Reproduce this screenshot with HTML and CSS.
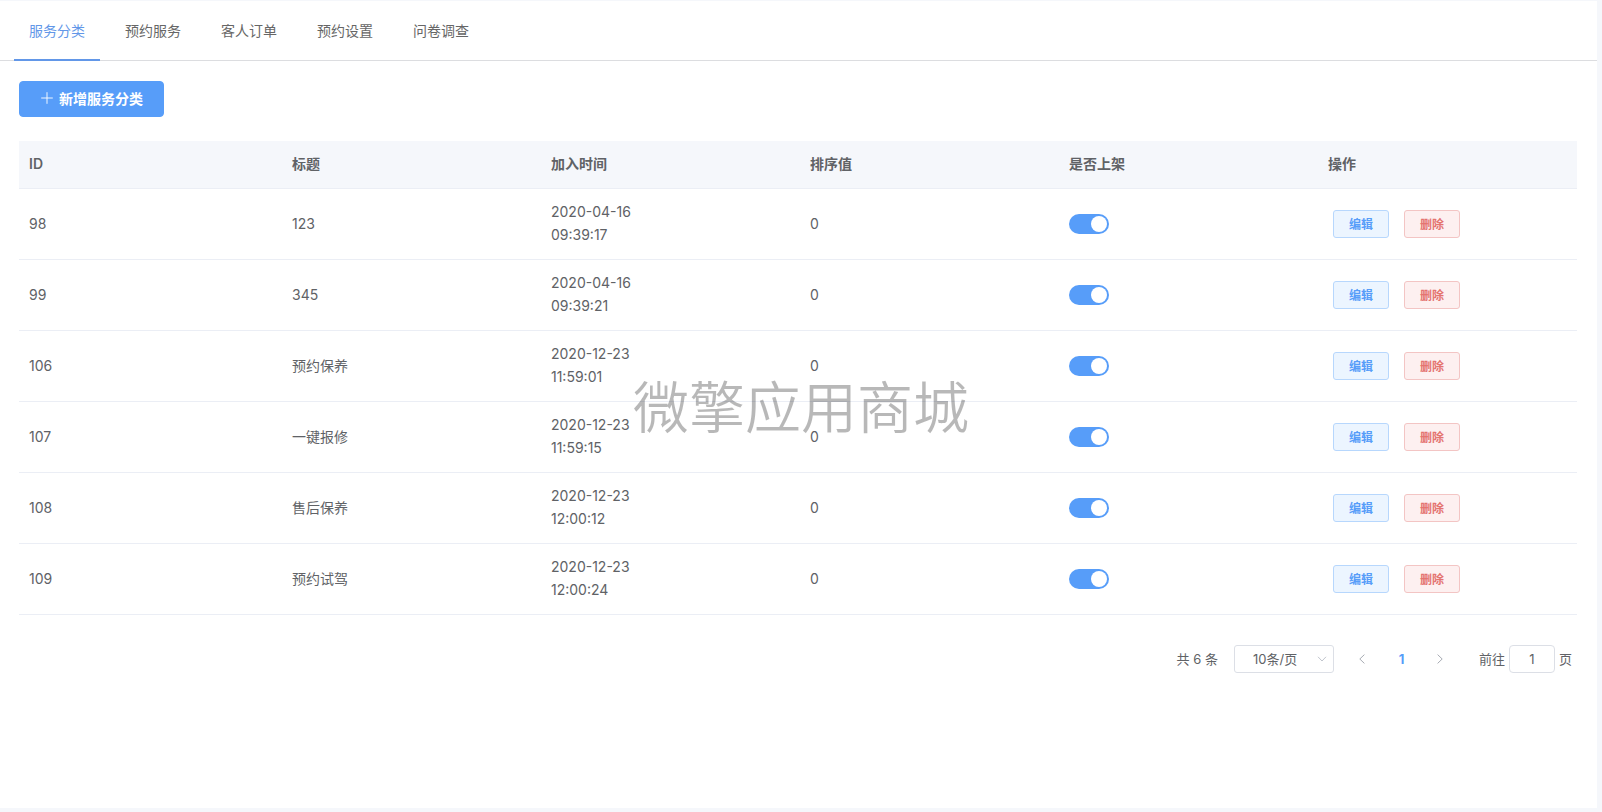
FILE: index.html
```
<!DOCTYPE html>
<html lang="zh-CN">
<head>
<meta charset="utf-8">
<meta name="viewport" content="width=device-width, initial-scale=1">
<title>服务分类</title>
<link rel="stylesheet" href="styles.css">
</head>
<body>
<div class="page">
  <nav class="tabs">
    <a class="tab tab-active" href="#category">服务分类</a>
    <a class="tab" href="#service">预约服务</a>
    <a class="tab" href="#order">客人订单</a>
    <a class="tab" href="#setting">预约设置</a>
    <a class="tab" href="#survey">问卷调查</a>
  </nav>
  <main class="content">
    <button class="btn-add" type="button">
      <svg class="icon-plus" viewBox="0 0 14 14" aria-hidden="true"><path d="M7 1.2V12.8M1.2 7H12.8"/></svg>
      <span>新增服务分类</span>
    </button>
    <table class="table">
      <colgroup><col class="col-id"><col><col><col><col><col></colgroup>
      <thead>
        <tr><th>ID</th><th>标题</th><th>加入时间</th><th>排序值</th><th>是否上架</th><th>操作</th></tr>
      </thead>
      <tbody>
        <tr><td>98</td><td>123</td><td><div class="time">2020-04-16 09:39:17</div></td><td>0</td><td class="cell-control"><input class="switch" type="checkbox" role="switch" aria-label="是否上架 98" checked></td><td class="cell-control"><div class="actions"><button class="btn btn-edit" type="button">编辑</button><button class="btn btn-delete" type="button">删除</button></div></td></tr>
        <tr><td>99</td><td>345</td><td><div class="time">2020-04-16 09:39:21</div></td><td>0</td><td class="cell-control"><input class="switch" type="checkbox" role="switch" aria-label="是否上架 99" checked></td><td class="cell-control"><div class="actions"><button class="btn btn-edit" type="button">编辑</button><button class="btn btn-delete" type="button">删除</button></div></td></tr>
        <tr><td>106</td><td>预约保养</td><td><div class="time">2020-12-23 11:59:01</div></td><td>0</td><td class="cell-control"><input class="switch" type="checkbox" role="switch" aria-label="是否上架 106" checked></td><td class="cell-control"><div class="actions"><button class="btn btn-edit" type="button">编辑</button><button class="btn btn-delete" type="button">删除</button></div></td></tr>
        <tr><td>107</td><td>一键报修</td><td><div class="time">2020-12-23 11:59:15</div></td><td>0</td><td class="cell-control"><input class="switch" type="checkbox" role="switch" aria-label="是否上架 107" checked></td><td class="cell-control"><div class="actions"><button class="btn btn-edit" type="button">编辑</button><button class="btn btn-delete" type="button">删除</button></div></td></tr>
        <tr><td>108</td><td>售后保养</td><td><div class="time">2020-12-23 12:00:12</div></td><td>0</td><td class="cell-control"><input class="switch" type="checkbox" role="switch" aria-label="是否上架 108" checked></td><td class="cell-control"><div class="actions"><button class="btn btn-edit" type="button">编辑</button><button class="btn btn-delete" type="button">删除</button></div></td></tr>
        <tr><td>109</td><td>预约试驾</td><td><div class="time">2020-12-23 12:00:24</div></td><td>0</td><td class="cell-control"><input class="switch" type="checkbox" role="switch" aria-label="是否上架 109" checked></td><td class="cell-control"><div class="actions"><button class="btn btn-edit" type="button">编辑</button><button class="btn btn-delete" type="button">删除</button></div></td></tr>
      </tbody>
    </table>
    <div class="pagination">
      <span class="total">共 6 条</span>
      <div class="size">
        <select class="size-select" aria-label="每页条数"><option>10条/页</option><option>20条/页</option><option>50条/页</option></select>
        <svg class="size-arrow" viewBox="0 0 10 6" aria-hidden="true"><path d="M1 0.8L5 5L9 0.8"/></svg>
      </div>
      <div class="pager">
        <button class="pager-btn" type="button" aria-label="上一页" disabled><svg class="chevron" viewBox="0 0 6 10" aria-hidden="true"><path d="M5.4 0.6L0.8 5L5.4 9.4"/></svg></button>
        <button class="pager-btn pager-current" type="button">1</button>
        <button class="pager-btn" type="button" aria-label="下一页" disabled><svg class="chevron" viewBox="0 0 6 10" aria-hidden="true"><path d="M0.6 0.6L5.2 5L0.6 9.4"/></svg></button>
      </div>
      <div class="jump">
        <label for="jump-page">前往</label>
        <input class="jump-input" id="jump-page" type="text" value="1">
        <span>页</span>
      </div>
    </div>
  </main>
  <div class="watermark">微擎应用商城</div>
</div>
</body>
</html>
```
FILE: styles.css
```
* {
  box-sizing: border-box;
}

body {
  margin: 0;
  padding: 1px 5px 4px 0;
  min-height: 100vh;
  display: flex;
  background: #f5f7fb;
  color: #606266;
  font: 14px/23px Inter, "Noto Sans CJK SC", sans-serif;
}

button,
input,
select {
  font-family: inherit;
  margin: 0;
}

.page {
  flex: 1;
  background: #fff;
}

.tabs {
  display: flex;
  gap: 10px;
  padding-left: 14px;
  border-bottom: 1px solid #dcdde0;
}

.tab {
  padding: 2px 15px 0;
  margin-bottom: -1px;
  border-bottom: 2px solid transparent;
  line-height: 56px;
  color: #666;
  text-decoration: none;
}

.tab-active {
  color: #6297e8;
  border-color: #6297e8;
}

.content {
  padding: 20px 20px 0 19px;
}

.btn-add {
  display: flex;
  align-items: center;
  gap: 5px;
  height: 36px;
  padding: 0 20px 2px;
  border: 1px solid #579df9;
  border-radius: 4px;
  background: #579df9;
  color: #fff;
  font-size: 14px;
  font-weight: 600;
}

.icon-plus {
  width: 14px;
  height: 14px;
  fill: none;
  stroke: #fff;
  stroke-width: 0.9;
}

.table {
  width: 100%;
  margin-top: 24px;
  table-layout: fixed;
  border-collapse: separate;
  border-spacing: 0;
}

.col-id {
  width: 16.88%;
}

th,
td {
  padding: 11px 10px 13px;
  border-bottom: 1px solid #ebeef5;
  text-align: left;
  vertical-align: middle;
}

th {
  background: #f5f7fb;
  font-weight: 600;
}

.cell-control {
  padding: 12px 10px;
}

.time {
  width: 96px;
}

.switch {
  display: block;
  appearance: none;
  width: 40px;
  height: 20px;
  border-radius: 10px;
  background: #c0ccda;
  padding: 2px;
}

.switch::before {
  content: "";
  display: block;
  width: 16px;
  height: 16px;
  border-radius: 50%;
  background: #fff;
}

.switch:checked {
  background: #579df9;
}

.switch:checked::before {
  margin-left: auto;
}

.actions {
  display: flex;
  gap: 15px;
  padding-left: 5px;
}

.btn {
  width: 56px;
  height: 28px;
  padding: 0 0 2px;
  border: 1px solid;
  border-radius: 3px;
  font-size: 12px;
  font-weight: 600;
}

.btn-edit {
  color: #579df9;
  background: #ecf5ff;
  border-color: #b7d7fd;
}

.btn-delete {
  color: #e47470;
  background: #fdf0f0;
  border-color: #f3c5c4;
}

.pagination {
  display: flex;
  justify-content: flex-end;
  align-items: center;
  margin-top: 30px;
  padding-right: 5px;
  font-size: 13px;
  line-height: 28px;
}

.size {
  position: relative;
  margin-left: 16px;
}

.size-select {
  display: block;
  appearance: none;
  width: 100px;
  height: 28px;
  padding: 0 18px;
  border: 1px solid #dcdfe6;
  border-radius: 3px;
  background: #fff;
  color: #606266;
  font-size: 13px;
}

.size-arrow {
  position: absolute;
  right: 7px;
  top: 11px;
  width: 10px;
  height: 6px;
  fill: none;
  stroke: #c0c4cc;
  pointer-events: none;
}

.pager {
  display: flex;
  margin: 0 19px 0 9px;
}

.pager-btn {
  display: flex;
  align-items: center;
  justify-content: center;
  width: 39px;
  height: 28px;
  padding: 0;
  border: 0;
  background: none;
  font-size: 13px;
}

.pager-current {
  color: #579df9;
  font-weight: 700;
}

.chevron {
  width: 6px;
  height: 10px;
  fill: none;
  stroke: #a8acb4;
}

.jump {
  display: flex;
  align-items: center;
  gap: 4px;
}

.jump-input {
  width: 46px;
  height: 28px;
  padding: 0;
  border: 1px solid #dcdfe6;
  border-radius: 4px;
  background: #fff;
  color: #606266;
  font-size: 13px;
  text-align: center;
}

.watermark {
  position: fixed;
  inset: 0;
  display: flex;
  align-items: center;
  justify-content: center;
  padding-bottom: 6px;
  color: rgba(0, 0, 0, 0.28);
  font-family: "Noto Sans CJK SC", sans-serif;
  font-size: 56px;
  font-weight: 350;
  pointer-events: none;
}
```
